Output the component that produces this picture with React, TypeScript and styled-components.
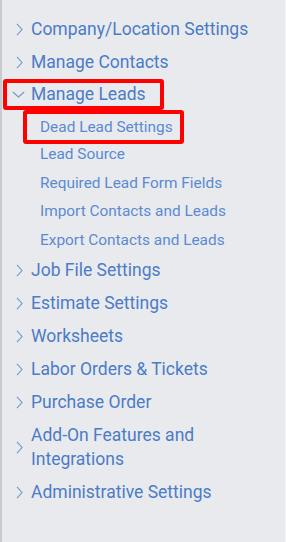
import React from "react";
import styled, { createGlobalStyle } from "styled-components";

const Global = createGlobalStyle`
  html, body { margin: 0; padding: 0; background: #e9eaee; }
  body { font-family: Roboto, "Liberation Sans", sans-serif; }
`;

const Sidebar = styled.nav`
  box-sizing: border-box;
  width: 286px;
  height: 542px;
  background: #e9eaee;
  border-left: 2px solid #c9cace;
  border-right: 1px solid #f3f3f6;
  padding-top: 12.5px;
`;

const List = styled.ul`
  list-style: none;
  margin: 0;
  padding: 0;
`;

const Row = styled.li<{ $boxed?: boolean }>`
  box-sizing: border-box;
  display: flex;
  align-items: center;
  padding: 4.5px 8px 4.5px 14px;
  color: #4b7cc6;
  font-size: 17.5px;
  line-height: 24px;
  ${(p) =>
    p.$boxed &&
    `
    width: 161px;
    margin-left: 1px;
    height: 31px;
    padding: 0 0 0 5px;
    border: 4px solid #ff0000;
    border-radius: 3px;
  `}
`;

const Chevron = styled.span<{ $open?: boolean }>`
  width: ${(p) => (p.$open ? 19 : 15)}px;
  flex: none;
  display: flex;
  align-items: center;
  color: #7196cc;
`;

const Label = styled.span`
  max-width: 232px;
`;

const SubList = styled.ul`
  list-style: none;
  margin: 0;
  padding: 0;
`;

const SubRow = styled.li<{ $boxed?: boolean }>`
  box-sizing: border-box;
  display: flex;
  align-items: center;
  height: 28.5px;
  padding-left: 38px;
  color: #5b8ad1;
  font-size: 15.4px;
  white-space: nowrap;
  ${(p) =>
    p.$boxed &&
    `
    width: 161px;
    height: 34px;
    margin-left: 21px;
    margin-bottom: -3.75px;
    padding-left: 13px;
    border: 4px solid #ff0000;
    border-radius: 3px;
  `}
`;

const Right = () => (
  <svg width="7" height="13" viewBox="0 0 7 13" fill="none">
    <path d="M1 0.8l5 5.7-5 5.7" stroke="currentColor" strokeWidth="1.1" />
  </svg>
);

const Down = () => (
  <svg width="13" height="7" viewBox="0 0 13 7" fill="none">
    <path d="M0.8 1l5.7 5 5.7-5" stroke="currentColor" strokeWidth="1.1" />
  </svg>
);

const before = ["Company/Location Settings", "Manage Contacts"];
const subs = [
  "Dead Lead Settings",
  "Lead Source",
  "Required Lead Form Fields",
  "Import Contacts and Leads",
  "Export Contacts and Leads",
];
const after = [
  "Job File Settings",
  "Estimate Settings",
  "Worksheets",
  "Labor Orders & Tickets",
  "Purchase Order",
  "Add-On Features and Integrations",
  "Administrative Settings",
];

export default function App() {
  return (
    <>
      <Global />
      <Sidebar>
        <List>
          {before.map((t) => (
            <Row key={t}>
              <Chevron>
                <Right />
              </Chevron>
              <Label>{t}</Label>
            </Row>
          ))}
          <Row $boxed>
            <Chevron $open>
              <Down />
            </Chevron>
            <Label>Manage Leads</Label>
          </Row>
          <SubList>
            {subs.map((t, i) => (
              <SubRow key={t} $boxed={i === 0}>
                {t}
              </SubRow>
            ))}
          </SubList>
          {after.map((t) => (
            <Row key={t}>
              <Chevron>
                <Right />
              </Chevron>
              <Label>{t}</Label>
            </Row>
          ))}
        </List>
      </Sidebar>
    </>
  );
}
